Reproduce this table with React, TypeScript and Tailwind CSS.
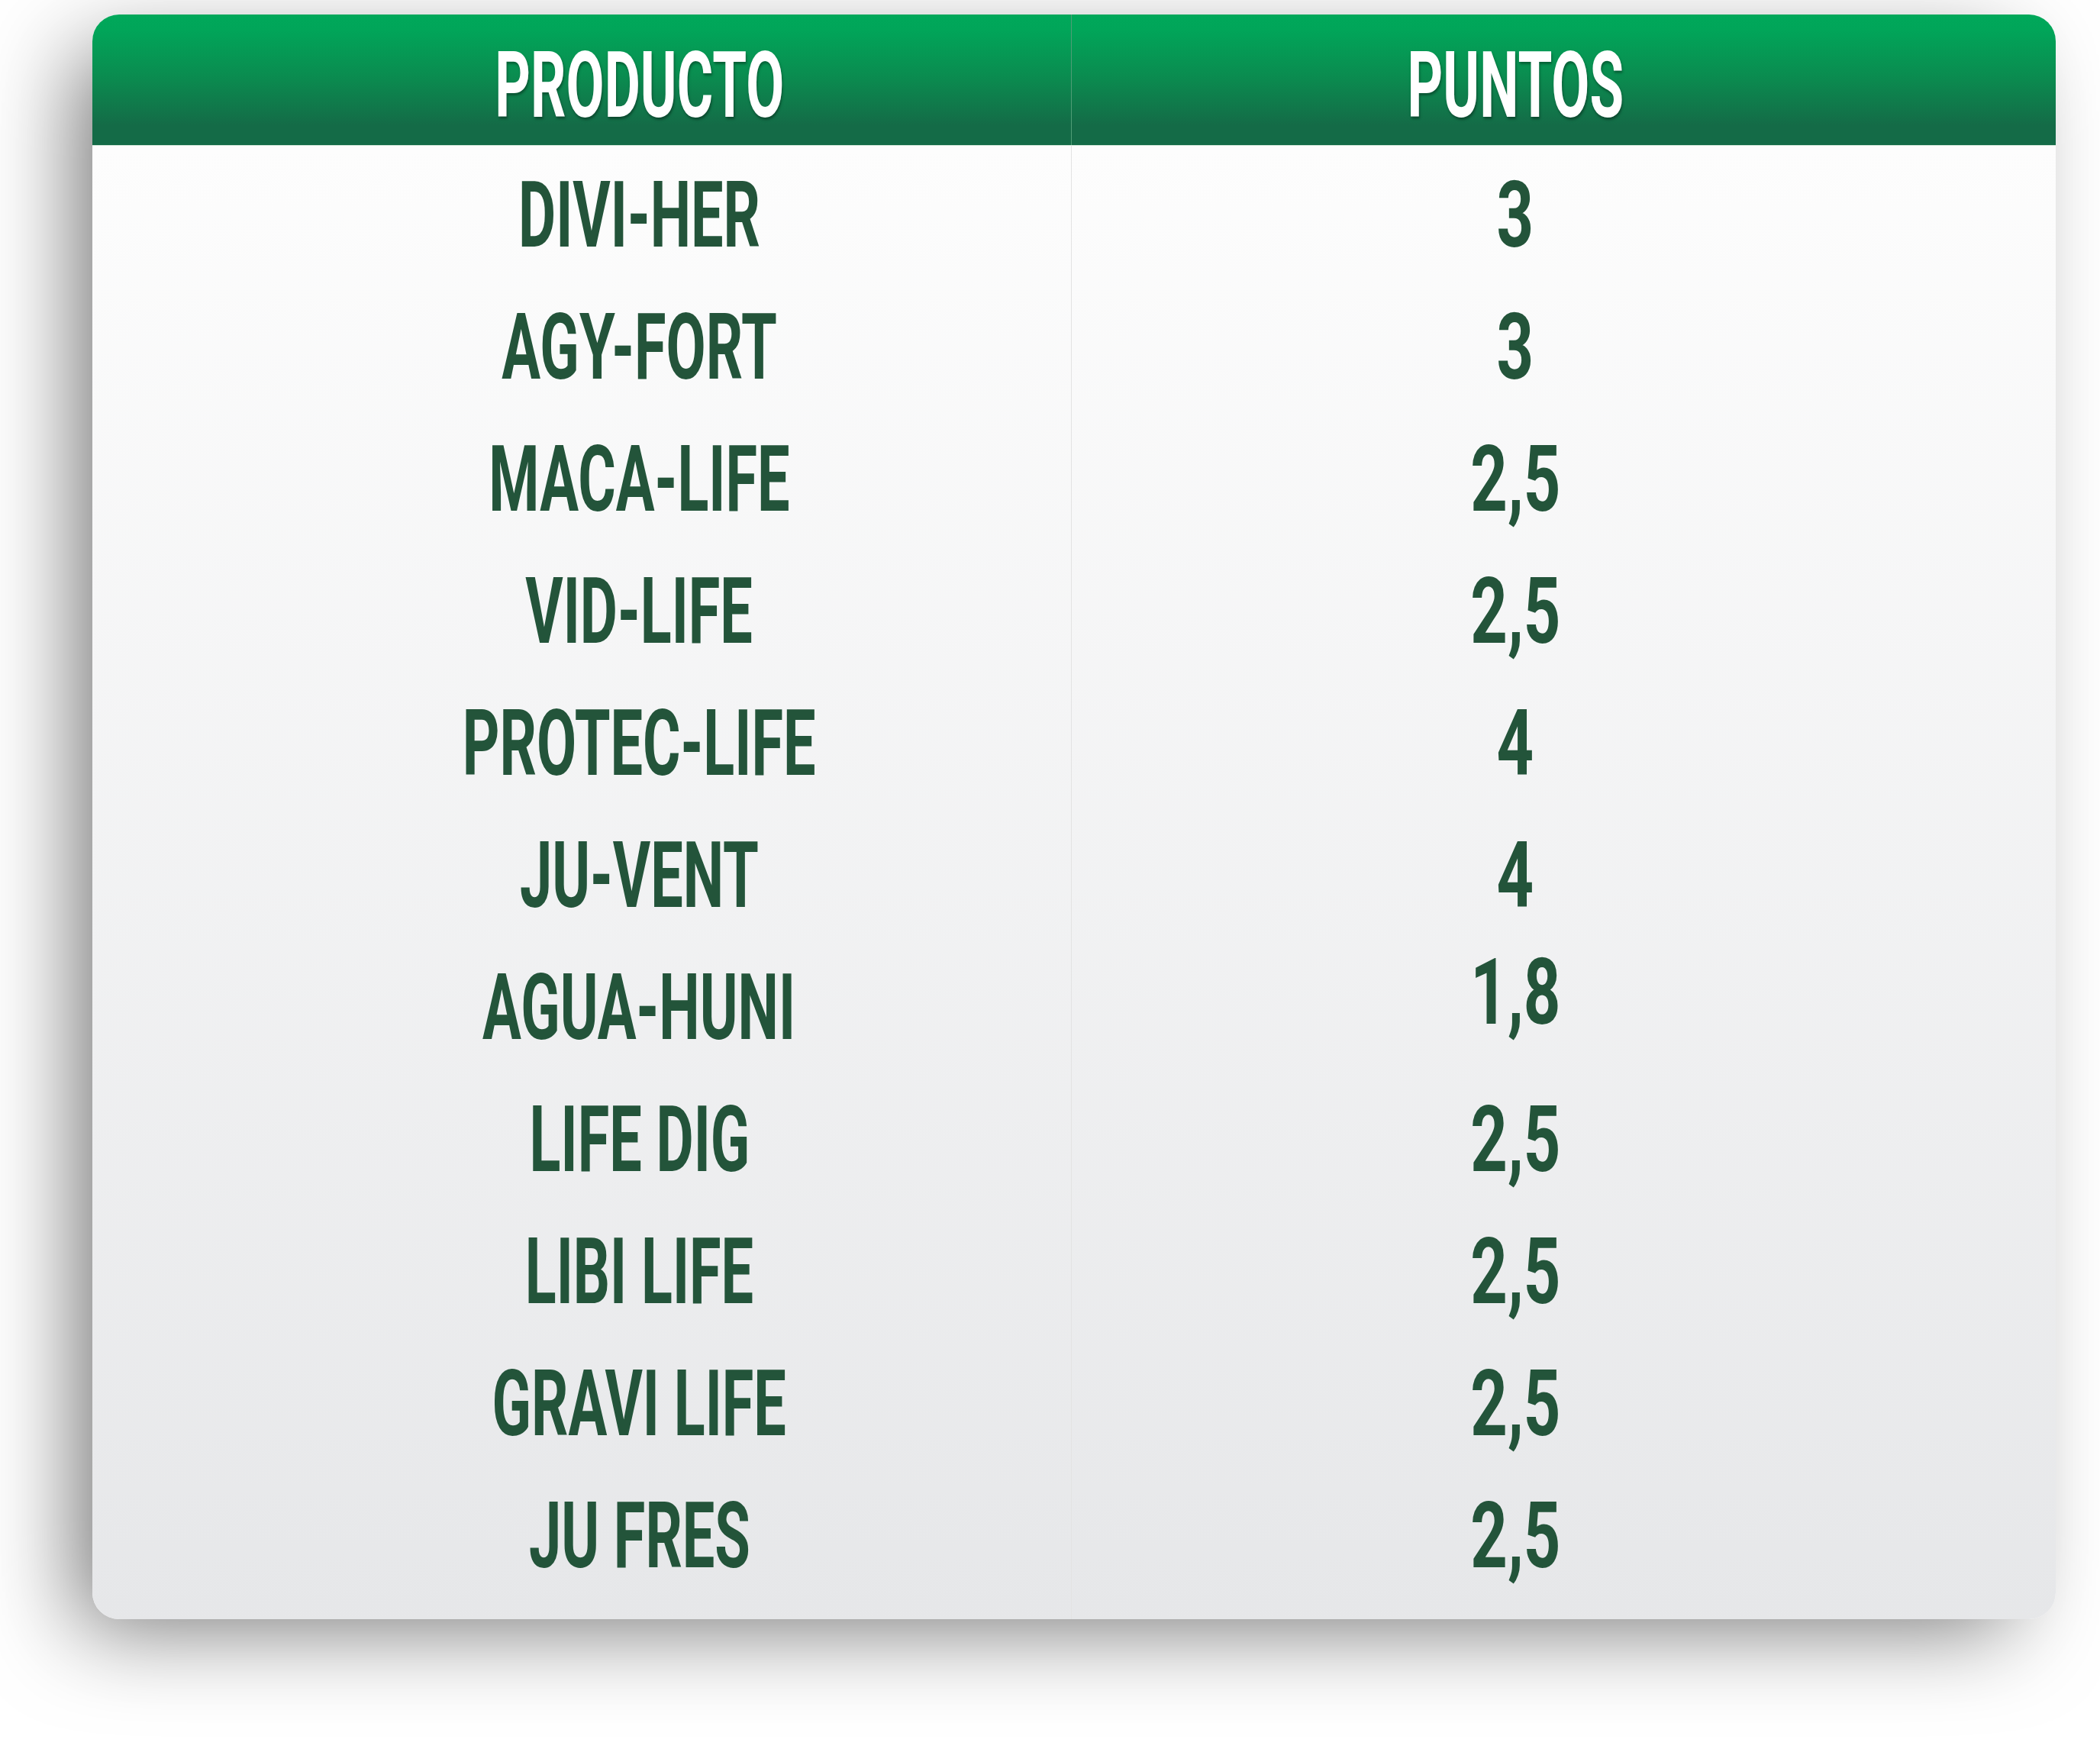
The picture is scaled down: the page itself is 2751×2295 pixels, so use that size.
const rows: { name: string; points: string; lift?: boolean }[] = [
  { name: "DIVI-HER", points: "3" },
  { name: "AGY-FORT", points: "3" },
  { name: "MACA-LIFE", points: "2,5" },
  { name: "VID-LIFE", points: "2,5" },
  { name: "PROTEC-LIFE", points: "4" },
  { name: "JU-VENT", points: "4" },
  { name: "AGUA-HUNI", points: "1,8", lift: true },
  { name: "LIFE DIG", points: "2,5" },
  { name: "LIBI LIFE", points: "2,5" },
  { name: "GRAVI LIFE", points: "2,5" },
  { name: "JU FRES", points: "2,5" },
];

const font = "font-['Roboto','Liberation_Sans',sans-serif] font-bold leading-none";

export default function App() {
  return (
    <div className="relative w-[2751px] h-[2295px] bg-white pt-[19px] pl-[121px]">
      {/* seam in the shadow */}
      <div className="absolute left-0 right-0 top-[1148px] h-[2px] bg-white/90" />

      <div className="relative z-10 flex h-[2102px] w-[2572px] flex-col overflow-hidden rounded-[35px] shadow-[-39px_30px_120px_-20px_rgba(0,0,0,0.55)]">
        {/* header */}
        <div className="grid h-[172px] grid-cols-[1283px_1289px] border-b border-[#d3e8da] bg-[linear-gradient(to_bottom,#00a85a_0%,#01a559_12%,#0b8a4f_50%,#146b47_85%,#146b47_100%)]">
          <div className="flex items-center justify-center border-r border-[#4f9d76] pt-[16px] pl-[151px]">
            <span
              className={`${font} inline-block scale-x-[0.6] text-[121px] text-white [text-shadow:2px_3px_4px_rgba(0,0,0,0.35)]`}
            >
              PRODUCTO
            </span>
          </div>
          <div className="flex items-center justify-center pt-[16px] pr-[127px]">
            <span
              className={`${font} inline-block scale-x-[0.6] text-[121px] text-white [text-shadow:2px_3px_4px_rgba(0,0,0,0.35)]`}
            >
              PUNTOS
            </span>
          </div>
        </div>

        {/* body */}
        <div className="grid flex-1 grid-cols-[1283px_1289px] bg-[linear-gradient(to_bottom,#fdfdfd,#e6e7e9)]">
          <div className="flex flex-col border-r border-[#e3e3e3] pt-[5px] pl-[151px]">
            {rows.map((r) => (
              <div key={r.name} className="flex h-[173px] items-center justify-center">
                <span className={`${font} inline-block scale-x-[0.625] text-[121px] text-[#23543a]`}>
                  {r.name}
                </span>
              </div>
            ))}
          </div>
          <div className="flex flex-col pt-[5px] pr-[127px]">
            {rows.map((r) => (
              <div
                key={r.name}
                className={`flex h-[173px] items-center justify-center ${r.lift ? "pb-[40px]" : ""}`}
              >
                <span className={`${font} inline-block scale-x-[0.7] text-[121px] text-[#23543a]`}>
                  {r.points}
                </span>
              </div>
            ))}
          </div>
        </div>
      </div>
    </div>
  );
}
